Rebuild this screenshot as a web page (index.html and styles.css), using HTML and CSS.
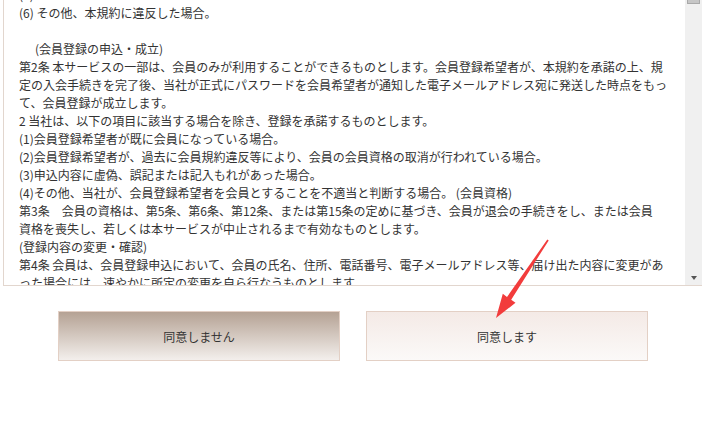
FILE: index.html
```html
<!DOCTYPE html>
<html lang="ja">
<head>
    <meta charset="UTF-8">
    <meta name="viewport" content="width=device-width, initial-scale=1.0">
    <title>会員規約</title>
    <link rel="stylesheet" href="styles.css">
</head>
<body>
    <div class="terms">
        <div class="terms-text"><div class="terms-scroll">(5)
(6) その他、本規約に違反した場合。

<span class="indent">(会員登録の申込・成立)</span>
第2条 本サービスの一部は、会員のみが利用することができるものとします。会員登録希望者が、本規約を承諾の上、規
定の入会手続きを完了後、当社が正式にパスワードを会員希望者が通知した電子メールアドレス宛に発送した時点をもっ
て、会員登録が成立します。
2 当社は、以下の項目に該当する場合を除き、登録を承諾するものとします。
(1)会員登録希望者が既に会員になっている場合。
(2)会員登録希望者が、過去に会員規約違反等により、会員の会員資格の取消が行われている場合。
(3)申込内容に虚偽、誤記または記入もれがあった場合。
(4)その他、当社が、会員登録希望者を会員とすることを不適当と判断する場合。 (会員資格)
第3条　会員の資格は、第5条、第6条、第12条、または第15条の定めに基づき、会員が退会の手続きをし、または会員
資格を喪失し、若しくは本サービスが中止されるまで有効なものとします。
(登録内容の変更・確認)
第4条 会員は、会員登録申込において、会員の氏名、住所、電話番号、電子メールアドレス等、届け出た内容に変更があ
った場合には、速やかに所定の変更を自ら行なうものとします。</div></div>
        <div class="scrollbar">
            <span class="thumb"></span>
            <span class="arrow-down"></span>
        </div>
    </div>

    <div class="actions">
        <button class="btn btn-decline" type="button">同意しません</button>
        <button class="btn btn-agree" type="button">同意します</button>
    </div>

    <!-- annotation arrow -->
    <svg class="pointer" width="702" height="437" viewBox="0 0 702 437">
        <polygon points="548.7,240.4 511.2,299.7 515.5,302.8 496,318 502.8,293.8 507,296.9 547.3,239.6" fill="#f23c3c"/>
    </svg>
</body>
</html>
```

FILE: styles.css
```css
/* Base */
html, body {
    margin: 0;
    padding: 0;
    overflow: hidden;
    background: #fff;
}

body {
    font-family: "Noto Sans CJK JP", "Noto Sans", sans-serif;
    font-size: 12px;
    color: #333;
}

/* Terms box (scrolled textarea look) */
.terms {
    display: flex;
    height: 286px;
    box-sizing: border-box;
    margin: 0 -1px 0 3px;
    border: 1px solid #e2d6ce;
    border-top: none;
}

.terms-text {
    flex: 1;
    overflow: hidden;
    padding-left: 15px;
}

.terms-scroll {
    margin-top: -14px;
    white-space: pre;
    line-height: 18px;
}

.indent {
    padding-left: 16px;
}

.scrollbar {
    width: 17px;
    background: #f0f0f0;
    display: flex;
    flex-direction: column;
    justify-content: space-between;
    align-items: center;
    padding-bottom: 5px;
    box-sizing: border-box;
}

.thumb {
    width: 13px;
    height: 4px;
    box-sizing: border-box;
    background: #c6c6c6;
    border: 1px solid #a9a9a9;
    border-top: none;
}

.arrow-down {
    width: 0;
    height: 0;
    border-left: 3.5px solid transparent;
    border-right: 3.5px solid transparent;
    border-top: 4px solid #555;
}

/* Buttons */
.actions {
    display: flex;
    gap: 26px;
    padding: 25px 0 0 58px;
}

.btn {
    width: 282px;
    height: 50px;
    border: 1px solid #e3d0c5;
    font-family: inherit;
    font-size: 12px;
    color: #333;
    cursor: pointer;
}

.btn-decline {
    background: linear-gradient(to bottom, #b5a294, #f3efec);
}

.btn-agree {
    background: linear-gradient(to bottom, #f4eae6, #fbf9f8);
}

.pointer {
    position: absolute;
    left: 0;
    top: 0;
    pointer-events: none;
}
```
